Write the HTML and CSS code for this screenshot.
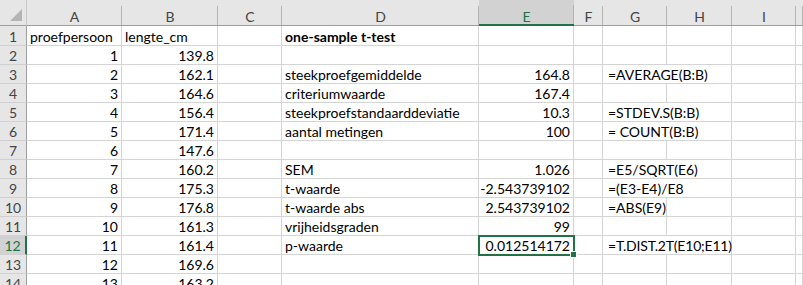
FILE: index.html
```html
<!DOCTYPE html>
<html lang="nl">

<head>
    <meta charset="UTF-8">
    <meta name="viewport" content="width=device-width, initial-scale=1.0">
    <title>one-sample t-test</title>
    <link rel="stylesheet" href="styles.css">
</head>

<body>
    <div class="sheet">
        <!-- kolomkoppen -->
        <div class="corner"></div>
        <div class="ch">A</div>
        <div class="ch">B</div>
        <div class="ch">C</div>
        <div class="ch">D</div>
        <div class="ch active">E</div>
        <div class="ch">F</div>
        <div class="ch">G</div>
        <div class="ch">H</div>
        <div class="ch">I</div>
        <div class="ch"></div>

        <!-- rij 1 -->
        <div class="rh">1</div>
        <div class="cell">proefpersoon</div>
        <div class="cell">lengte_cm</div>
        <div class="cell"></div>
        <div class="cell bold">one-sample t-test</div>
        <div class="cell"></div>
        <div class="cell"></div>
        <div class="cell"></div>
        <div class="cell"></div>
        <div class="cell"></div>
        <div class="cell"></div>

        <!-- rij 2 -->
        <div class="rh">2</div>
        <div class="cell num">1</div>
        <div class="cell num">139.8</div>
        <div class="cell"></div>
        <div class="cell"></div>
        <div class="cell"></div>
        <div class="cell"></div>
        <div class="cell"></div>
        <div class="cell"></div>
        <div class="cell"></div>
        <div class="cell"></div>

        <!-- rij 3 -->
        <div class="rh">3</div>
        <div class="cell num">2</div>
        <div class="cell num">162.1</div>
        <div class="cell"></div>
        <div class="cell">steekproefgemiddelde</div>
        <div class="cell num">164.8</div>
        <div class="cell"></div>
        <div class="cell formula wide">=AVERAGE(B:B)</div>
        <div class="cell"></div>
        <div class="cell"></div>

        <!-- rij 4 -->
        <div class="rh">4</div>
        <div class="cell num">3</div>
        <div class="cell num">164.6</div>
        <div class="cell"></div>
        <div class="cell">criteriumwaarde</div>
        <div class="cell num">167.4</div>
        <div class="cell"></div>
        <div class="cell"></div>
        <div class="cell"></div>
        <div class="cell"></div>
        <div class="cell"></div>

        <!-- rij 5 -->
        <div class="rh">5</div>
        <div class="cell num">4</div>
        <div class="cell num">156.4</div>
        <div class="cell"></div>
        <div class="cell">steekproefstandaarddeviatie</div>
        <div class="cell num">10.3</div>
        <div class="cell"></div>
        <div class="cell formula wide">=STDEV.S(B:B)</div>
        <div class="cell"></div>
        <div class="cell"></div>

        <!-- rij 6 -->
        <div class="rh">6</div>
        <div class="cell num">5</div>
        <div class="cell num">171.4</div>
        <div class="cell"></div>
        <div class="cell">aantal metingen</div>
        <div class="cell num">100</div>
        <div class="cell"></div>
        <div class="cell formula wide">= COUNT(B:B)</div>
        <div class="cell"></div>
        <div class="cell"></div>

        <!-- rij 7 -->
        <div class="rh">7</div>
        <div class="cell num">6</div>
        <div class="cell num">147.6</div>
        <div class="cell"></div>
        <div class="cell"></div>
        <div class="cell"></div>
        <div class="cell"></div>
        <div class="cell"></div>
        <div class="cell"></div>
        <div class="cell"></div>
        <div class="cell"></div>

        <!-- rij 8 -->
        <div class="rh">8</div>
        <div class="cell num">7</div>
        <div class="cell num">160.2</div>
        <div class="cell"></div>
        <div class="cell">SEM</div>
        <div class="cell num">1.026</div>
        <div class="cell"></div>
        <div class="cell formula wide">=E5/SQRT(E6)</div>
        <div class="cell"></div>
        <div class="cell"></div>

        <!-- rij 9 -->
        <div class="rh">9</div>
        <div class="cell num">8</div>
        <div class="cell num">175.3</div>
        <div class="cell"></div>
        <div class="cell">t-waarde</div>
        <div class="cell num">-2.543739102</div>
        <div class="cell"></div>
        <div class="cell formula wide">=(E3-E4)/E8</div>
        <div class="cell"></div>
        <div class="cell"></div>

        <!-- rij 10 -->
        <div class="rh">10</div>
        <div class="cell num">9</div>
        <div class="cell num">176.8</div>
        <div class="cell"></div>
        <div class="cell">t-waarde abs</div>
        <div class="cell num">2.543739102</div>
        <div class="cell"></div>
        <div class="cell formula">=ABS(E9)</div>
        <div class="cell"></div>
        <div class="cell"></div>
        <div class="cell"></div>

        <!-- rij 11 -->
        <div class="rh">11</div>
        <div class="cell num">10</div>
        <div class="cell num">161.3</div>
        <div class="cell"></div>
        <div class="cell">vrijheidsgraden</div>
        <div class="cell num">99</div>
        <div class="cell"></div>
        <div class="cell"></div>
        <div class="cell"></div>
        <div class="cell"></div>
        <div class="cell"></div>

        <!-- rij 12 -->
        <div class="rh active">12</div>
        <div class="cell num">11</div>
        <div class="cell num">161.4</div>
        <div class="cell"></div>
        <div class="cell">p-waarde</div>
        <div class="cell num selected">0.012514172</div>
        <div class="cell"></div>
        <div class="cell formula wide tight">=T.DIST.2T(E10;E11)</div>
        <div class="cell"></div>
        <div class="cell"></div>

        <!-- rij 13 -->
        <div class="rh">13</div>
        <div class="cell num">12</div>
        <div class="cell num">169.6</div>
        <div class="cell"></div>
        <div class="cell"></div>
        <div class="cell"></div>
        <div class="cell"></div>
        <div class="cell"></div>
        <div class="cell"></div>
        <div class="cell"></div>
        <div class="cell"></div>

        <!-- rij 14 -->
        <div class="rh">14</div>
        <div class="cell num">13</div>
        <div class="cell num">163.2</div>
        <div class="cell"></div>
        <div class="cell"></div>
        <div class="cell"></div>
        <div class="cell"></div>
        <div class="cell"></div>
        <div class="cell"></div>
        <div class="cell"></div>
        <div class="cell"></div>
    </div>
</body>

</html>
```

FILE: styles.css
```css
* {
    margin: 0;
    padding: 0;
    box-sizing: border-box;
}

body {
    width: 803px;
    height: 285px;
    overflow: hidden;
    background-color: #ffffff;
    font-family: Lato, 'Liberation Sans', sans-serif;
    font-size: 14px;
    color: #000000;
}

.sheet {
    display: grid;
    grid-template-columns: 27px 95px 96px 64px 197px 95px 29px 64px 65px 64px 7px;
    grid-template-rows: 26px 20px repeat(13, 19px);
}

.corner,
.ch,
.rh {
    background-color: #e6e6e6;
    color: #444444;
    display: flex;
    align-items: center;
    justify-content: center;
}

.corner {
    position: relative;
    border-bottom: 1px solid #9e9e9e;
    border-right: 1px solid #c8c8c8;
}

.corner::after {
    content: '';
    position: absolute;
    right: 4px;
    bottom: 4px;
    border-style: solid;
    border-width: 0 0 12px 12px;
    border-color: transparent transparent #b4b4b4 transparent;
}

.ch {
    padding-top: 7px;
    border-bottom: 1px solid #9e9e9e;
    background-image: linear-gradient(#b4b4b4, #b4b4b4);
    background-size: 1px 19px;
    background-position: right bottom;
    background-repeat: no-repeat;
}

.ch.active {
    background-color: #d2d2d2;
    color: #217346;
    border-bottom: 2px solid #217346;
    padding-top: 8px;
}

.rh {
    border-right: 1px solid #9e9e9e;
    border-bottom: 1px solid #d0d0d0;
    padding-top: 1px;
}

.rh.active {
    background-color: #d2d2d2;
    color: #217346;
    border-right: 2px solid #217346;
}

.cell {
    border-right: 1px solid #d4d4d4;
    border-bottom: 1px solid #d4d4d4;
    padding: 1px 3px 0 3px;
    white-space: nowrap;
    overflow: hidden;
    display: flex;
    align-items: center;
}

.num {
    justify-content: flex-end;
}

.bold {
    font-weight: bold;
}

.formula {
    padding-left: 5px;
}

.wide {
    grid-column: span 2;
    overflow: visible;
}

.tight {
    letter-spacing: -0.2px;
    padding-right: 0;
}

.selected {
    position: relative;
    overflow: visible;
    outline: 2px solid #217346;
    outline-offset: -1px;
}

.selected::after {
    content: '';
    position: absolute;
    right: -4px;
    bottom: -4px;
    width: 5px;
    height: 5px;
    background-color: #217346;
    border: 1px solid #ffffff;
}
```
